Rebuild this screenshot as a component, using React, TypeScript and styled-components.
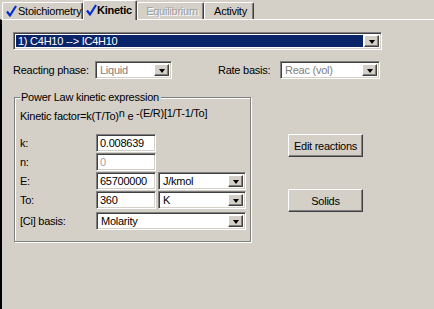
import styled, { createGlobalStyle, css } from 'styled-components'

const GlobalStyle = createGlobalStyle`
    html, body {
        margin: 0;
        padding: 0;
        background: #d4d0c8;
    }
    body {
        font-family: "Liberation Sans", Arial, sans-serif;
        font-size: 11px;
        letter-spacing: -0.25px;
        color: #000;
    }
`

const sunken = css`
    box-sizing: border-box;
    border-top: 1px solid #808080;
    border-left: 1px solid #808080;
    border-right: 1px solid #fff;
    border-bottom: 1px solid #fff;
    box-shadow: inset 1px 1px 0 #404040, inset -1px -1px 0 #d4d0c8;
`

const raised = css`
    box-sizing: border-box;
    border-top: 1px solid #fff;
    border-left: 1px solid #fff;
    border-right: 1px solid #404040;
    border-bottom: 1px solid #404040;
    box-shadow: inset -1px -1px 0 #808080, inset 1px 1px 0 #d4d0c8;
    background: #d4d0c8;
`

const Check = () => (
    <svg width="11" height="12" viewBox="0 0 11 12">
        <path d="M1 6.5 L4 10.5 L10 1" fill="none" stroke="#0030d0" strokeWidth="2.2" strokeLinejoin="round" />
    </svg>
)

type ComboProps = {
    width: number
    value: string
    selected?: boolean
    disabled?: boolean
}

const Combo = ({ width, value, selected, disabled }: ComboProps) => (
    <ComboBox $w={width}>
        <ComboText $selected={selected} $disabled={disabled}>
            {value}
        </ComboText>
        <DropButton>
            <Arrow />
        </DropButton>
    </ComboBox>
)

export default function App() {
    return (
        <>
            <GlobalStyle />
            <Window>
                <TabStrip>
                    <Tab $w={81}>
                        <Check />
                        Stoichiometry
                    </Tab>
                    <Tab $w={54} $active>
                        <Check />
                        Kinetic
                    </Tab>
                    <Tab $w={67} $disabled $center>
                        Equilibrium
                    </Tab>
                    <Tab $w={50} $center>
                        Activity
                    </Tab>
                </TabStrip>
                <Panel>
                    <Combo width={369} value="1) C4H10 --> IC4H10" selected />
                    <PhaseRow>
                        <Label $w={82}>Reacting phase:</Label>
                        <Combo width={77} value="Liquid" disabled />
                        <Label $w={62} $ml={46}>
                            Rate basis:
                        </Label>
                        <Combo width={100} value="Reac (vol)" disabled />
                    </PhaseRow>
                    <Main>
                        <GroupBox>
                            <Legend>Power Law kinetic expression</Legend>
                            <Formula>
                                Kinetic factor=k(T/To)<Sup>n</Sup> e <Sup>-(E/R)[1/T-1/To]</Sup>
                            </Formula>
                            <Rows>
                                <FieldRow>
                                    <Label $w={74}>k:</Label>
                                    <Field $w={60}>0.008639</Field>
                                </FieldRow>
                                <FieldRow>
                                    <Label $w={74}>n:</Label>
                                    <Field $w={60} $disabled>
                                        0
                                    </Field>
                                </FieldRow>
                                <FieldRow>
                                    <Label $w={74}>E:</Label>
                                    <Field $w={60}>65700000</Field>
                                    <Combo width={88} value="J/kmol" />
                                </FieldRow>
                                <FieldRow>
                                    <Label $w={74}>To:</Label>
                                    <Field $w={60}>360</Field>
                                    <Combo width={88} value="K" />
                                </FieldRow>
                                <FieldRow $mt={2}>
                                    <Label $w={74}>[Ci] basis:</Label>
                                    <Combo width={150} value="Molarity" />
                                </FieldRow>
                            </Rows>
                        </GroupBox>
                        <ButtonColumn>
                            <Button>Edit reactions</Button>
                            <Button>Solids</Button>
                        </ButtonColumn>
                    </Main>
                </Panel>
            </Window>
        </>
    )
}

const Window = styled.div`
    width: 434px;
    height: 309px;
    display: flex;
    flex-direction: column;
    overflow: hidden;
    background: #d4d0c8;
`

const TabStrip = styled.div`
    display: flex;
    align-items: flex-end;
    height: 19px;
    padding-left: 2px;
    position: relative;
    z-index: 1;
`

const Tab = styled.div<{ $w: number; $active?: boolean; $disabled?: boolean; $center?: boolean }>`
    box-sizing: border-box;
    width: ${({ $w }) => $w}px;
    height: 17px;
    display: flex;
    align-items: center;
    gap: 1px;
    padding: 0 0 1px 3px;
    border-top: 1px solid #fff;
    border-left: 1px solid #fff;
    border-right: 1px solid #404040;
    box-shadow: inset -1px 0 0 #808080;
    border-radius: 2px 2px 0 0;
    background: #d4d0c8;
    white-space: nowrap;
    color: ${({ $disabled }) => ($disabled ? '#a0a0a0' : '#000')};
    text-shadow: ${({ $disabled }) => ($disabled ? '1px 1px 0 #fff' : 'none')};
    justify-content: ${({ $center }) => ($center ? 'center' : 'flex-start')};

    ${({ $active }) =>
        $active &&
        css`
            height: 20px;
            margin-bottom: -1px;
            padding: 0 0 2px 2px;
            gap: 0;
            font-weight: bold;
        `}
`

const Panel = styled.div`
    flex: 1;
    border-top: 1px solid #fff;
    border-left: 2px solid #000;
    padding: 12px 0 0 11px;
`

const ComboBox = styled.div<{ $w: number }>`
    ${sunken};
    width: ${({ $w }) => $w}px;
    height: 18px;
    display: flex;
    align-items: stretch;
    padding: 2px;
    background: #fff;
    flex-shrink: 0;
`

const ComboText = styled.div<{ $selected?: boolean; $disabled?: boolean }>`
    flex: 1;
    display: flex;
    align-items: center;
    padding-left: 2px;
    margin-right: 1px;
    white-space: nowrap;
    background: ${({ $selected }) => ($selected ? '#0a246a' : 'transparent')};
    color: ${({ $selected, $disabled }) => ($selected ? '#fff' : $disabled ? '#808080' : '#000')};
`

const DropButton = styled.div`
    ${raised};
    width: 15px;
    display: flex;
    align-items: center;
    justify-content: center;
`

const Arrow = styled.div`
    width: 0;
    height: 0;
    border-left: 3.5px solid transparent;
    border-right: 3.5px solid transparent;
    border-top: 4px solid #000;
    margin-top: 1px;
`

const PhaseRow = styled.div`
    display: flex;
    align-items: center;
    margin-top: 11px;
`

const Label = styled.div<{ $w: number; $ml?: number }>`
    width: ${({ $w }) => $w}px;
    margin-left: ${({ $ml }) => $ml ?? 0}px;
    flex-shrink: 0;
    white-space: nowrap;
`

const Main = styled.div`
    display: flex;
    align-items: flex-start;
    margin-top: 12px;
`

const GroupBox = styled.fieldset`
    box-sizing: border-box;
    width: 237px;
    height: 151px;
    margin: 0 0 0 1px;
    padding: 0 5px 0 5px;
    border: 1px solid #808080;
    box-shadow: 1px 1px 0 #fff, inset 1px 1px 0 #fff;
    min-inline-size: 0;
`

const Legend = styled.legend`
    padding: 0 2px 0 1px;
    line-height: 13px;
    background: #d4d0c8;
`

const Formula = styled.div`
    margin-top: 5px;
    line-height: 14px;
    white-space: nowrap;
`

const Sup = styled.span`
    vertical-align: 3px;
    line-height: 0;
`

const Rows = styled.div`
    display: flex;
    flex-direction: column;
    gap: 1px;
    margin-top: 11px;
`

const FieldRow = styled.div<{ $mt?: number }>`
    display: flex;
    align-items: center;
    gap: 2px;
    margin-top: ${({ $mt }) => $mt ?? 0}px;
`

const Field = styled.div<{ $w: number; $disabled?: boolean }>`
    ${sunken};
    width: ${({ $w }) => $w}px;
    height: 18px;
    background: #fff;
    padding: 0 3px;
    display: flex;
    align-items: center;
    color: ${({ $disabled }) => ($disabled ? '#a0a0a0' : '#000')};
    flex-shrink: 0;
`

const ButtonColumn = styled.div`
    display: flex;
    flex-direction: column;
    gap: 32px;
    margin: 43px 0 0 37px;
`

const Button = styled.div`
    ${raised};
    width: 75px;
    height: 23px;
    display: flex;
    align-items: center;
    justify-content: center;
`
